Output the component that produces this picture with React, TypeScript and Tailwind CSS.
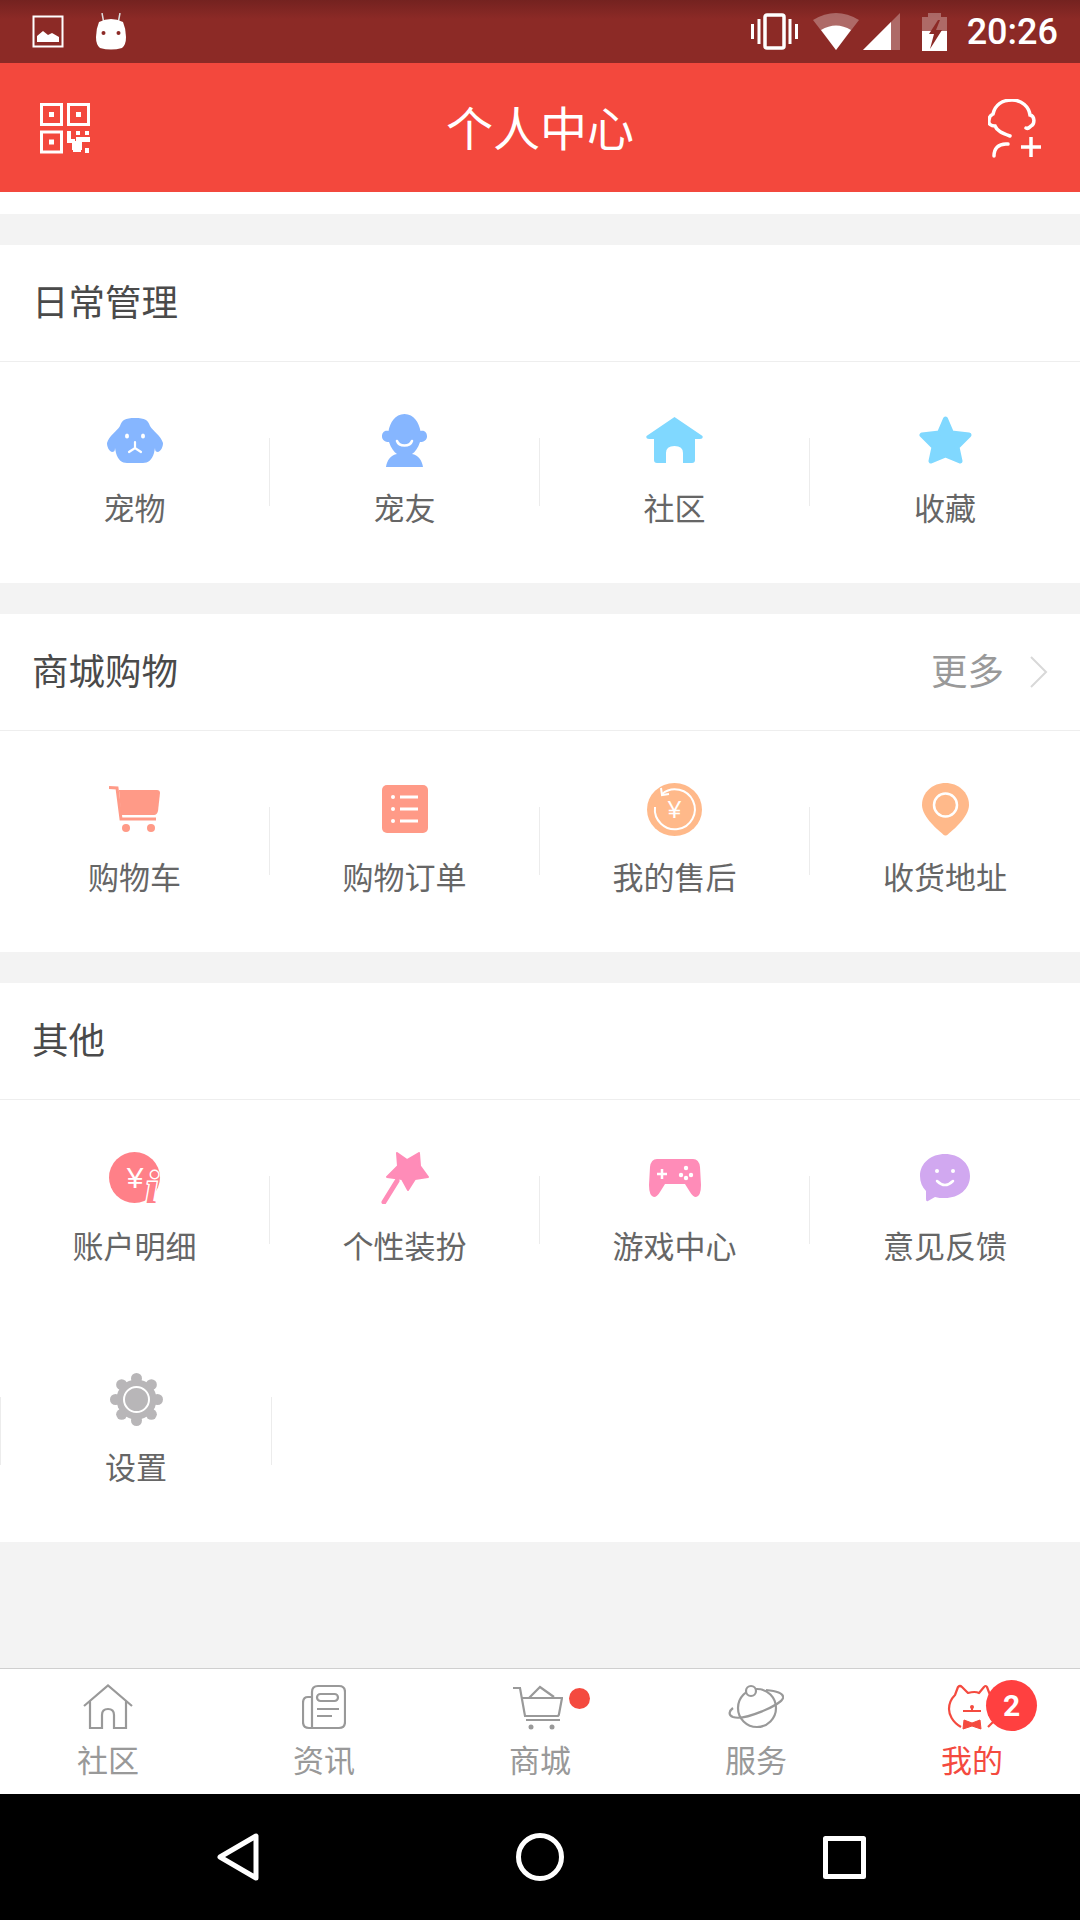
import React from "react";

const CJK = "font-['Noto_Sans_CJK_SC','Noto_Sans',sans-serif]";

function Yen({ x, y, size }: { x: number; y: number; size: number }) {
  return (
    <text x={x} y={y} fontSize={size} fontFamily="Liberation Sans, sans-serif" fill="#fff" textAnchor="middle">
      ¥
    </text>
  );
}

const Dog = () => (
  <svg width="56" height="45" viewBox="0 0 56 45">
    <path fill="#86b6ff" d="M28 0C18 0 15 2 13 8C10 13 2 18 0 25C0 29 2 33 5 34C7 34 8 33 8 30L9 35C11 42 15 45 20 45L36 45C41 45 45 42 47 35L48 30C48 33 49 34 51 34C54 33 56 29 56 25C54 18 46 13 43 8C41 2 38 0 28 0Z" />
    <ellipse cx="20" cy="18" rx="2" ry="2.6" fill="#fff" />
    <ellipse cx="36" cy="18" rx="2" ry="2.6" fill="#fff" />
    <path d="M28 24V30M22 34L28 30L34 34" stroke="#fff" strokeWidth="2.200" fill="none" strokeLinecap="round" />
  </svg>
);
const Friend = () => (
  <svg width="45" height="53" viewBox="0 0 45 53">
    <path fill="#86b6ff" d="M22.500 0C13 0 8 9 6.500 17C2 16 0 19 0 22.500C0 26 3 28 7 28C9 34 12 38 15 40C9 41 5 46 4 53L41 53C40 46 36 41 30 40C33 38 36 34 38 28C42 28 45 26 45 22.500C45 19 43 16 38.500 17C37 9 32 0 22.500 0Z" />
    <path d="M15 27C17 33 28 33 30 27" stroke="#fff" strokeWidth="2.500" fill="none" strokeLinecap="round" />
  </svg>
);
const House = () => (
  <svg width="57" height="46" viewBox="0 0 57 46">
    <path fill="#80d8ff" d="M28.500 0L56.500 19Q57.500 22 54 22L49 22L49 43Q49 46 46 46L37 46L37 36Q37 29 28.500 29Q20 29 20 36L20 46L11 46Q8 46 8 43L8 22L3 22Q-.5 22 .5 19Z" />
  </svg>
);
const Star = () => (
  <svg width="53" height="48" viewBox="0 0 53 48">
    <path fill="#80d8ff" stroke="#80d8ff" strokeWidth="5" strokeLinejoin="round" d="M26.500 3L32.500 17L50 19L38 31L41 45L26.500 39L12 45L15 31L3 19L20.500 17Z" />
  </svg>
);
const Cart = () => (
  <svg width="51" height="46" viewBox="0 0 51 46">
    <path fill="#ff9a87" d="M10 4L48 4Q51 4 51 7L49 25Q48 29 45 29L12 29Z" />
    <path d="M0 1.500L8 2L12 33L47 33" stroke="#ff9a87" strokeWidth="3" fill="none" />
    <circle cx="17" cy="42" r="4" fill="#ff9a87" />
    <circle cx="42" cy="42" r="4" fill="#ff9a87" />
  </svg>
);
const Order = () => (
  <svg width="46" height="48" viewBox="0 0 46 48">
    <rect width="46" height="48" rx="5" fill="#ff9a87" />
    {[12, 24, 36].map((y) => (
      <g key={y}>
        <circle cx="11" cy={y} r="2" fill="#fff" />
        <rect x="18" y={y - 1.5} width="18" height="3" fill="#fff" />
      </g>
    ))}
  </svg>
);
const AfterSale = () => (
  <svg width="55" height="53" viewBox="0 0 55 53">
    <ellipse cx="27.500" cy="26.500" rx="27.500" ry="26.500" fill="#ffb98a" />
    <path d="M8 24A20 20 0 1 0 15 11" stroke="#fff" strokeWidth="2" fill="none" />
    <path d="M14 5L15 12L22 11" stroke="#fff" strokeWidth="2" fill="none" />
    <Yen x={27.5} y={35} size={24} />
  </svg>
);
const Pin = () => (
  <svg width="47" height="53" viewBox="0 0 47 53">
    <path fill="#ffb98a" d="M23.500 0C36 0 47 9 47 22C47 34 30 48 25 52Q23.500 53 22 52C17 48 0 34 0 22C0 9 11 0 23.500 0Z" />
    <circle cx="23.500" cy="22" r="11.500" fill="none" stroke="#fff" strokeWidth="2.500" />
  </svg>
);
const Account = () => (
  <svg className="ml-[8px] mb-[-10px]" width="60" height="63" viewBox="0 0 60 63">
    <circle cx="25.500" cy="25.500" r="25.500" fill="#ff8088" />
    <Yen x={26} y={36} size={30} />
    <text x="43" y="51" fontSize="46" fontFamily="Liberation Serif, serif" fontStyle="italic" fontWeight="700" fill="#ff8088" stroke="#fff" strokeWidth="3" paintOrder="stroke" textAnchor="middle">
      i
    </text>
  </svg>
);
const Wand = () => (
  <svg width="48" height="52" viewBox="0 0 48 52">
    <path fill="#ff8cb8" stroke="#ff8cb8" strokeWidth="2" strokeLinejoin="round" d="M16 1L26 8L38 1L39 14L47 25L34 27L27 38L21 27L6 25L17 14Z" />
    <path d="M3 50L16 29" stroke="#ff8cb8" strokeWidth="5" strokeLinecap="round" />
  </svg>
);
const Game = () => (
  <svg width="52" height="38" viewBox="0 0 52 38">
    <path fill="#ff8cb8" d="M8 0L44 0Q50 0 51 8L52 26Q52 37 47 38Q44 38 41 33L36 25L16 25L11 33Q8 38 5 38Q0 37 0 26L1 8Q2 0 8 0Z" />
    <path d="M8 15H18M13 10V20" stroke="#fff" strokeWidth="2.500" />
    <circle cx="37" cy="9" r="2.200" fill="#fff" />
    <circle cx="32" cy="16" r="2.200" fill="#fff" />
    <circle cx="42" cy="16" r="2.200" fill="#fff" />
    <circle cx="37" cy="19" r="2.200" fill="#fff" />
  </svg>
);
const Chat = () => (
  <svg width="50" height="48" viewBox="0 0 50 48">
    <path fill="#d1a8f0" d="M25 0C39 0 50 9 50 22C50 35 39 44 25 44C21 44 18 44 15 43L8 47Q6 48 6 45L6 37C2 33 0 28 0 22C0 9 11 0 25 0Z" />
    <circle cx="17" cy="17" r="2" fill="#fff" />
    <circle cx="33" cy="17" r="2" fill="#fff" />
    <path d="M17 27Q25 35 33 27" stroke="#fff" strokeWidth="2.500" fill="none" strokeLinecap="round" />
  </svg>
);
const Gear = () => (
  <svg width="53" height="53" viewBox="0 0 53 53">
    <circle cx="26.500" cy="26.500" r="20" fill="#b8b6b8" />
    {[0, 45, 90, 135, 180, 225, 270, 315].map((a) => (
      <circle key={a} cx={26.5 + 21 * Math.cos((a * Math.PI) / 180)} cy={26.5 + 21 * Math.sin((a * Math.PI) / 180)} r="5.500" fill="#b8b6b8" />
    ))}
    <circle cx="26.500" cy="26.500" r="12.500" fill="none" stroke="#fff" strokeWidth="2" />
  </svg>
);

const TabHome = () => (
  <svg width="50" height="46" viewBox="0 0 50 46" fill="none" stroke="#999" strokeWidth="2.200">
    <path d="M1 22L25 1.500L49 22M7 17L7 44L19 44L19 31Q19 25 25 25Q31 25 31 31L31 44L43 44L43 17" />
  </svg>
);
const TabNews = () => (
  <svg width="44" height="46" viewBox="0 0 44 46" fill="none" stroke="#999" strokeWidth="2.200">
    <path d="M10 43Q10 42 10 8Q10 2 16 2L37 2Q43 2 43 8L43 38Q43 44 37 44L7 44Q1 44 1 38L1 19Q1 13 6 13L10 13" />
    <rect x="15" y="10" width="21" height="7" rx="3.500" />
    <path d="M15 25H37M15 32H30" />
  </svg>
);
const TabCart = () => (
  <svg className="mr-[4px]" width="50" height="46" viewBox="0 0 50 46" fill="none" stroke="#999" strokeWidth="2.200">
    <path d="M0 4L7 4L12 32L44 32Q46 32 46 30L49 14L9 14M16 14L27 3L41 13M13 36H47" />
    <circle cx="18" cy="43" r="2.500" fill="#999" stroke="none" />
    <circle cx="39" cy="43" r="2.500" fill="#999" stroke="none" />
  </svg>
);
const TabPlanet = () => (
  <svg width="56" height="46" viewBox="0 0 56 46" fill="none" stroke="#999" strokeWidth="2.200">
    <circle cx="29" cy="24" r="19" />
    <path d="M38 6C48 7 56 9 55 14C53 21 16 37 5 33C0 31 1 27 5 24" />
    <circle cx="23" cy="7" r="5" fill="#fff" />
  </svg>
);
const TabCat = () => (
  <svg width="52" height="46" viewBox="0 0 52 46">
    <path d="M15 43C6 38 3 30 3 25C3 19 6 14 9 11L12 3Q14 1 16 3L22 9Q29 7 33 9L38 3Q40 1 41 3L44 11M47 38L42 43" stroke="#f44a3f" strokeWidth="2.200" fill="none" strokeLinejoin="round" />
    <circle cx="26" cy="23" r="2" fill="#f44a3f" />
    <path d="M17 27H35M26 23V27" stroke="#f44a3f" strokeWidth="2" fill="none" />
    <path d="M18 36L26 39L34 36L35 45L26 42L17 45Z" fill="#f44a3f" stroke="#f44a3f" strokeLinejoin="round" />
  </svg>
);

type Item = { label: string; icon: React.ReactNode };

function Divider() {
  return <div className="w-px h-[68px] mt-[76px] shrink-0 bg-[#ececec]" />;
}

function Cell({ item }: { item: Item }) {
  return (
    <div className="flex-1 flex flex-col items-center pt-[48px]">
      <div className="h-[60px] flex items-center justify-center">{item.icon}</div>
      <div className={`mt-[17px] text-[31px] leading-[40px] text-[#666] ${CJK}`}>{item.label}</div>
    </div>
  );
}

function Section({ title, more, rows }: { title: string; more?: boolean; rows: Item[][] }) {
  return (
    <section className="bg-white">
      <div className="h-[117px] flex items-center justify-between pl-[32px] pr-[32px] border-b border-[#eeeeee]">
        <span className={`text-[36.5px] leading-[48px] text-[#4a4a4a] mt-[-4px] ${CJK}`}>{title}</span>
        {more && (
          <span className="flex items-center">
            <span className={`text-[36.5px] leading-[48px] text-[#999] mt-[-4px] ${CJK}`}>更多</span>
            <svg className="ml-[26px]" width="18" height="32" viewBox="0 0 18 32" fill="none" stroke="#d8d8d8" strokeWidth="2">
              <path d="M1 1L16 16L1 31" />
            </svg>
          </span>
        )}
      </div>
      {rows.map((row, i) =>
        row.length === 4 ? (
          <div key={i} className="grid grid-cols-4 h-[221px]">
            {row.map((it, j) => (
              <div key={it.label} className="flex">
                <Cell item={it} />
                {j < 3 && <Divider />}
              </div>
            ))}
          </div>
        ) : (
          <div key={i} className="flex h-[221px]">
            <Divider />
            <div className="flex w-[271px]">
              <Cell item={row[0]} />
              <Divider />
            </div>
          </div>
        )
      )}
    </section>
  );
}

function Tab({ label, icon, active, children }: { label: string; icon: React.ReactNode; active?: boolean; children?: React.ReactNode }) {
  return (
    <div className="flex-1 flex flex-col items-center pt-[15px]">
      <div className="relative h-[46px] flex items-center justify-center">
        {icon}
        {children}
      </div>
      <div className={`mt-[14px] text-[31px] leading-[30px] ${active ? "text-[#f44a3f]" : "text-[#999]"} ${CJK}`}>{label}</div>
    </div>
  );
}

export default function App() {
  return (
    <div className="w-[1080px] h-[1920px] flex flex-col bg-[#f3f3f3] overflow-hidden">
      {/* status bar */}
      <div className="h-[63px] shrink-0 flex items-center justify-between bg-linear-to-b from-[#742220] to-[#8c2a26] to-30%">
        <div className="flex items-center pl-[32px] gap-[32px]">
          <svg width="32" height="33" viewBox="0 0 32 33">
            <rect x="1.500" y="1.500" width="29" height="30" fill="none" stroke="#fff" strokeWidth="2" />
            <path d="M5 27L5 21L11 16L16 20L20 18L27 22L27 27Z" fill="#fff" />
          </svg>
          <svg width="30" height="37" viewBox="0 0 30 37">
            <path d="M6 0L7.500 8M24 0L22.500 8" stroke="#ddd" strokeWidth="1.500" />
            <path d="M3 9Q15 3 27 9Q30 16 30 24Q30 32 26 35Q15 38 4 35Q0 32 0 24Q0 16 3 9Z" fill="#fff" />
            <circle cx="7.500" cy="20" r="2" fill="#8c2a26" />
            <circle cx="22.500" cy="20" r="2" fill="#8c2a26" />
          </svg>
        </div>
        <div className="flex items-center pr-[22px]">
          <svg width="47" height="37" viewBox="0 0 47 37">
            <rect x="14" y="2" width="19" height="33" rx="2" fill="none" stroke="#fff" strokeWidth="3.500" />
            <path d="M1.500 11V26M8 6V31M39 6V31M45.500 11V26" stroke="#fff" strokeWidth="3" />
          </svg>
          <svg className="ml-[15px]" width="46" height="38" viewBox="0 0 46 38">
            <path d="M0 7Q23 -7 46 7L23 37Z" fill="#fff" opacity="0.3" />
            <path d="M8 17Q23 8 38 17L23 37Z" fill="#fff" />
          </svg>
          <svg className="ml-[4px]" width="37" height="37" viewBox="0 0 37 37">
            <path d="M37 0V37H0Z" fill="#fff" opacity="0.3" />
            <path d="M28 9V37H0Z" fill="#fff" />
          </svg>
          <svg className="ml-[22px]" width="25" height="38" viewBox="0 0 25 38">
            <path d="M6 0H19V4H25V38H0V4H6Z" fill="#fff" opacity="0.3" />
            <path d="M0 18H25V38H0Z" fill="#fff" />
            <path d="M16 7L7 21H12L8 36L20 17H14L18 7Z" fill="#8c2a26" />
          </svg>
          <span className="ml-[20px] text-[36px] leading-[36px] text-white font-medium font-['Roboto',sans-serif]">20:26</span>
        </div>
      </div>

      {/* header */}
      <header className="h-[129px] shrink-0 bg-[#f3483d] grid grid-cols-[1fr_auto_1fr] items-center">
        <div className="pl-[40px] pt-[1px]">
          <svg width="50" height="51" viewBox="0 0 50 51" fill="none" stroke="#fff" strokeWidth="3">
            <rect x="1.500" y="1.500" width="20" height="20" />
            <rect x="28.500" y="1.500" width="20" height="20" />
            <rect x="1.500" y="29" width="20" height="20" />
            <g fill="#fff" stroke="none">
              <rect x="9" y="9" width="5" height="5" />
              <rect x="36" y="9" width="5" height="5" />
              <rect x="9" y="36.500" width="5" height="5" />
              <rect x="36" y="28" width="4" height="4" />
              <rect x="45" y="28" width="4" height="4" />
              <rect x="27" y="28" width="4" height="12" />
              <rect x="27" y="36" width="8" height="4" />
              <rect x="32" y="38" width="10" height="9" />
              <rect x="36" y="34" width="14" height="5" />
              <rect x="45" y="45" width="4" height="5" />
              <rect x="33" y="44" width="8" height="5" />
            </g>
          </svg>
        </div>
        <div className={`text-[47px] leading-[60px] text-white mt-[-4px] ${CJK}`}>个人中心</div>
        <div className="flex justify-end pr-[38px] pt-[2px]">
          <svg width="54" height="60" viewBox="0 0 54 60" fill="none" stroke="#fff" strokeWidth="3.500" strokeLinecap="round">
            <path d="M22 37C14 34 9 32 7 27C3 27 0 25 1 21C1 18 3 16 5 15C7 6 14 1 24 1C34 1 41 8 42 16C47 17 47 25 43 27C41 29 40 30 38 29" />
            <path d="M20 45C10 44 6 50 6 57" />
            <path d="M33 48H53M43 38V58" strokeLinecap="butt" />
          </svg>
        </div>
      </header>

      <div className="h-[22px] shrink-0 bg-white" />

      <main className="flex-1 flex flex-col gap-[31px] pt-[31px]">
        <Section
          title="日常管理"
          rows={[
            [
              { label: "宠物", icon: <Dog /> },
              { label: "宠友", icon: <Friend /> },
              { label: "社区", icon: <House /> },
              { label: "收藏", icon: <Star /> },
            ],
          ]}
        />
        <Section
          title="商城购物"
          more
          rows={[
            [
              { label: "购物车", icon: <Cart /> },
              { label: "购物订单", icon: <Order /> },
              { label: "我的售后", icon: <AfterSale /> },
              { label: "收货地址", icon: <Pin /> },
            ],
          ]}
        />
        <Section
          title="其他"
          rows={[
            [
              { label: "账户明细", icon: <Account /> },
              { label: "个性装扮", icon: <Wand /> },
              { label: "游戏中心", icon: <Game /> },
              { label: "意见反馈", icon: <Chat /> },
            ],
            [{ label: "设置", icon: <Gear /> }],
          ]}
        />
      </main>

      {/* tab bar */}
      <nav className="h-[126px] shrink-0 flex bg-white border-t border-[#cfcfcf]">
        <Tab label="社区" icon={<TabHome />} />
        <Tab label="资讯" icon={<TabNews />} />
        <Tab label="商城" icon={<TabCart />}>
          <div className="absolute left-[56px] top-[4px] w-[21px] h-[21px] rounded-full bg-[#f44a3f]" />
        </Tab>
        <Tab label="服务" icon={<TabPlanet />} />
        <Tab label="我的" active icon={<TabCat />}>
          <div className="absolute left-[40px] top-[-4px] w-[51px] h-[51px] rounded-full bg-[#ff4040] flex items-center justify-center text-white text-[30px] leading-none font-bold font-['Roboto',sans-serif]">
            2
          </div>
        </Tab>
      </nav>

      {/* android nav */}
      <div className="h-[126px] shrink-0 bg-black flex items-center">
        <div className="w-[516px] flex justify-center pr-[40px]">
          <svg width="42" height="48" viewBox="0 0 42 48" fill="none" stroke="#fff" strokeWidth="5" strokeLinejoin="round">
            <path d="M39 3V45L3 24Z" />
          </svg>
        </div>
        <svg width="48" height="48" viewBox="0 0 48 48" fill="none" stroke="#fff" strokeWidth="5">
          <circle cx="24" cy="24" r="21.500" />
        </svg>
        <div className="w-[516px] flex justify-center pl-[45px]">
          <svg width="43" height="43" viewBox="0 0 43 43" fill="none" stroke="#fff" strokeWidth="5" strokeLinejoin="round">
            <rect x="2.500" y="2.500" width="38" height="38" />
          </svg>
        </div>
      </div>
    </div>
  );
}
